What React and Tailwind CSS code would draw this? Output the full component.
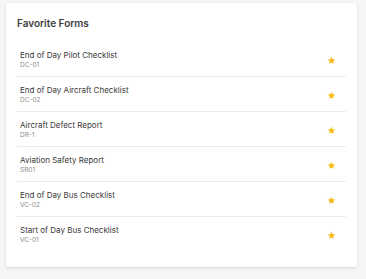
import React from "react";

const forms = [
  { title: "End of Day Pilot Checklist", code: "DC-01" },
  { title: "End of Day Aircraft Checklist", code: "DC-02" },
  { title: "Aircraft Defect Report", code: "DR-1" },
  { title: "Aviation Safety Report", code: "SR01" },
  { title: "End of Day Bus Checklist", code: "VC-02" },
  { title: "Start of Day Bus Checklist", code: "VC-01" },
];

function Star() {
  return (
    <svg viewBox="0 0 24 24" className="w-[9px] h-[9px]" fill="#f5bb14">
      <path d="M12 2l2.9 6.6 7.1.6-5.4 4.7 1.6 7L12 17.3 5.8 20.9l1.6-7L2 9.2l7.1-.6z" />
    </svg>
  );
}

export default function App() {
  return (
    <div
      className="w-[366px] h-[279px] bg-[#f4f5f7] pt-[3px] pl-[6px]"
      style={{ fontFamily: "Inter, 'Noto Sans', sans-serif" }}
    >
      <div className="w-[351px] h-[264px] bg-white rounded-[3px] shadow-[0_1px_3px_rgba(0,0,0,0.12)] px-[11px] pt-[13px]">
        <h2 className="text-[10px] leading-[14px] font-semibold text-[#3d3d3d] mb-[12px]">
          Favorite Forms
        </h2>
        <ul>
          {forms.map((f, i) => (
            <li
              key={f.code}
              className={`flex items-center justify-between pl-[3px] pr-[10px] pt-[8px] pb-[6px] ${
                i < forms.length - 1 ? "border-b border-[#ececec]" : ""
              }`}
            >
              <div>
                <div className="text-[8px] leading-[11px] text-[#383838]">{f.title}</div>
                <div className="text-[6.5px] leading-[9px] text-[#8a8a8a]">{f.code}</div>
              </div>
              <Star />
            </li>
          ))}
        </ul>
      </div>
    </div>
  );
}
